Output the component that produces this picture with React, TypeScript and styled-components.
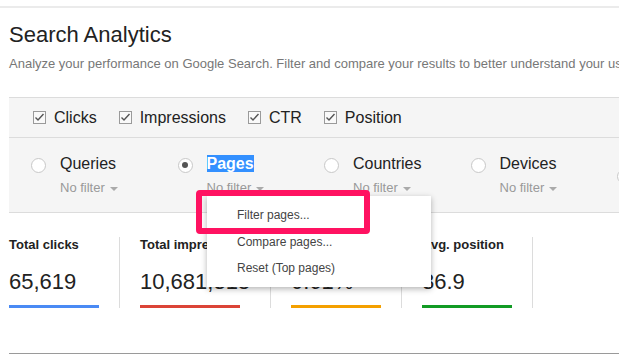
import styled, { createGlobalStyle } from "styled-components"

const GlobalStyle = createGlobalStyle`
  html, body {
    margin: 0;
    padding: 0;
    background: #fff;
    overflow: hidden;
  }
  body {
    font-family: "Liberation Sans", Arial, sans-serif;
    color: #222;
  }
`

const Page = styled.div`
  position: relative;
  width: 619px;
  height: 358px;
  overflow: hidden;
`

const TopRule = styled.div`
  margin-top: 6px;
  height: 2px;
  background: #ebebeb;
`

const Header = styled.div`
  padding-left: 9px;
`

const Title = styled.h1`
  margin: 14px 0 0;
  font-size: 22px;
  line-height: 26px;
  font-weight: normal;
  color: #222;
  white-space: nowrap;
`

const Subtitle = styled.p`
  margin: 8px 0 0;
  font-size: 13px;
  line-height: 16px;
  color: #777;
  white-space: nowrap;
`

const Panel = styled.div`
  margin: 25px 0 0 9px;
  background: #f5f5f5;
  border-top: 1px solid #dcdcdc;
  border-bottom: 1px solid #dcdcdc;
`

const CheckRow = styled.div`
  display: flex;
  align-items: center;
  gap: 22px;
  height: 39px;
  padding-left: 24px;
  border-bottom: 1px solid #dcdcdc;
`

const CheckItem = styled.label`
  display: flex;
  align-items: center;
  gap: 8px;
  font-size: 16px;
  color: #222;
  white-space: nowrap;
`

const RadioRow = styled.div`
  display: flex;
  padding: 16px 0 16px 22px;
  white-space: nowrap;
`

const RadioItem = styled.div`
  flex: none;
  width: 146.5px;
  display: grid;
  grid-template-columns: 15px 1fr;
  column-gap: 14px;
  align-items: center;
`

const RadioCircle = styled.span<{ $on?: boolean }>`
  width: 15px;
  height: 15px;
  box-sizing: border-box;
  border-radius: 50%;
  border: 1px solid #c8c8c8;
  background: #fff;
  display: flex;
  align-items: center;
  justify-content: center;
  margin-top: 2px;

  &::after {
    content: "";
    display: ${p => (p.$on ? "block" : "none")};
    width: 6px;
    height: 6px;
    border-radius: 50%;
    background: #555;
  }
`

const RadioLabel = styled.span<{ $selected?: boolean }>`
  font-size: 16px;
  line-height: 20px;
  color: #222;

  span {
    font-weight: ${p => (p.$selected ? "bold" : "normal")};
    background: ${p => (p.$selected ? "#3390ff" : "transparent")};
    color: ${p => (p.$selected ? "#fff" : "inherit")};
  }
`

const FilterHint = styled.span`
  grid-column: 2;
  margin-top: 6px;
  font-size: 13px;
  line-height: 16px;
  color: #999;
  display: flex;
  align-items: center;

  &::after {
    content: "";
    margin-left: 5px;
    margin-top: 1px;
    border-left: 4px solid transparent;
    border-right: 4px solid transparent;
    border-top: 4px solid #aaa;
  }
`

const Metrics = styled.div`
  display: flex;
  margin: 24px 0 0 9px;
`

const Metric = styled.div<{ $width: number; $first?: boolean }>`
  flex: none;
  width: ${p => p.$width}px;
  padding: 0 20px 0 ${p => (p.$first ? 0 : 20)}px;
  border-right: 1px solid #dcdcdc;
  height: 71px;
  white-space: nowrap;
`

const MetricTitle = styled.div`
  font-size: 13px;
  line-height: 16px;
  font-weight: bold;
  color: #222;
`

const MetricValue = styled.div`
  margin-top: 16px;
  font-size: 22px;
  line-height: 26px;
  color: #222;
`

const MetricBar = styled.div<{ $color: string; $width: number }>`
  margin-top: 10px;
  height: 3px;
  width: ${p => p.$width}px;
  background: ${p => p.$color};
`

const BottomRule = styled.div`
  margin: 45px 0 0 9px;
  height: 1px;
  background: #9a9a9a;
`

const Menu = styled.ul`
  position: absolute;
  left: 207px;
  top: 196px;
  width: 224px;
  height: 91px;
  box-sizing: border-box;
  margin: 0;
  padding: 6px 0 0;
  list-style: none;
  background: #fff;
  box-shadow: 0 2px 6px rgba(0, 0, 0, 0.3);
`

const MenuItem = styled.li`
  padding-left: 30px;
  font-size: 12px;
  line-height: 26.5px;
  color: #444;
  white-space: nowrap;
`

const Highlight = styled.div`
  position: absolute;
  left: 196px;
  top: 190px;
  width: 174px;
  height: 44px;
  box-sizing: border-box;
  border: 6px solid #ff1261;
  border-radius: 4px;
`

const CheckBox = () => (
  <svg width="13" height="13" viewBox="0 0 13 13">
    <rect x="0.5" y="0.5" width="12" height="12" fill="#f9f9f9" stroke="#9a9a9a" />
    <path d="M2.5 6.5 L5 9 L10.5 3" fill="none" stroke="#555" strokeWidth="1.4" />
  </svg>
)

const checks = ["Clicks", "Impressions", "CTR", "Position"]
const dimensions = ["Queries", "Pages", "Countries", "Devices", ""]

const metrics = [
  { title: "Total clicks", value: "65,619", color: "#4a8af4", width: 90, bar: 90 },
  { title: "Total impressions", value: "10,681,318", color: "#db4437", width: 110, bar: 100 },
  { title: "Average CTR", value: "0.61%", color: "#f4a000", width: 90, bar: 90 },
  { title: "Avg. position", value: "36.9", color: "#129b24", width: 90, bar: 90 },
]

export default function App() {
  return (
    <Page>
      <GlobalStyle />
      <TopRule />
      <Header>
        <Title>Search Analytics</Title>
        <Subtitle>
          Analyze your performance on Google Search. Filter and compare your results to better understand your user's search patterns.
        </Subtitle>
      </Header>

      <Panel>
        <CheckRow>
          {checks.map(c => (
            <CheckItem key={c}>
              <CheckBox />
              {c}
            </CheckItem>
          ))}
        </CheckRow>
        <RadioRow>
          {dimensions.map(d => (
            <RadioItem key={d || "more"}>
              <RadioCircle $on={d === "Pages"} />
              <RadioLabel $selected={d === "Pages"}>
                <span>{d}</span>
              </RadioLabel>
              {d && <FilterHint>No filter</FilterHint>}
            </RadioItem>
          ))}
        </RadioRow>
      </Panel>

      <Metrics>
        {metrics.map((m, i) => (
          <Metric key={m.title} $width={m.width} $first={i === 0}>
            <MetricTitle>{m.title}</MetricTitle>
            <MetricValue>{m.value}</MetricValue>
            <MetricBar $color={m.color} $width={m.bar} />
          </Metric>
        ))}
      </Metrics>

      <BottomRule />

      <Menu>
        <MenuItem>Filter pages...</MenuItem>
        <MenuItem>Compare pages...</MenuItem>
        <MenuItem>Reset (Top pages)</MenuItem>
      </Menu>
      <Highlight />
    </Page>
  )
}
